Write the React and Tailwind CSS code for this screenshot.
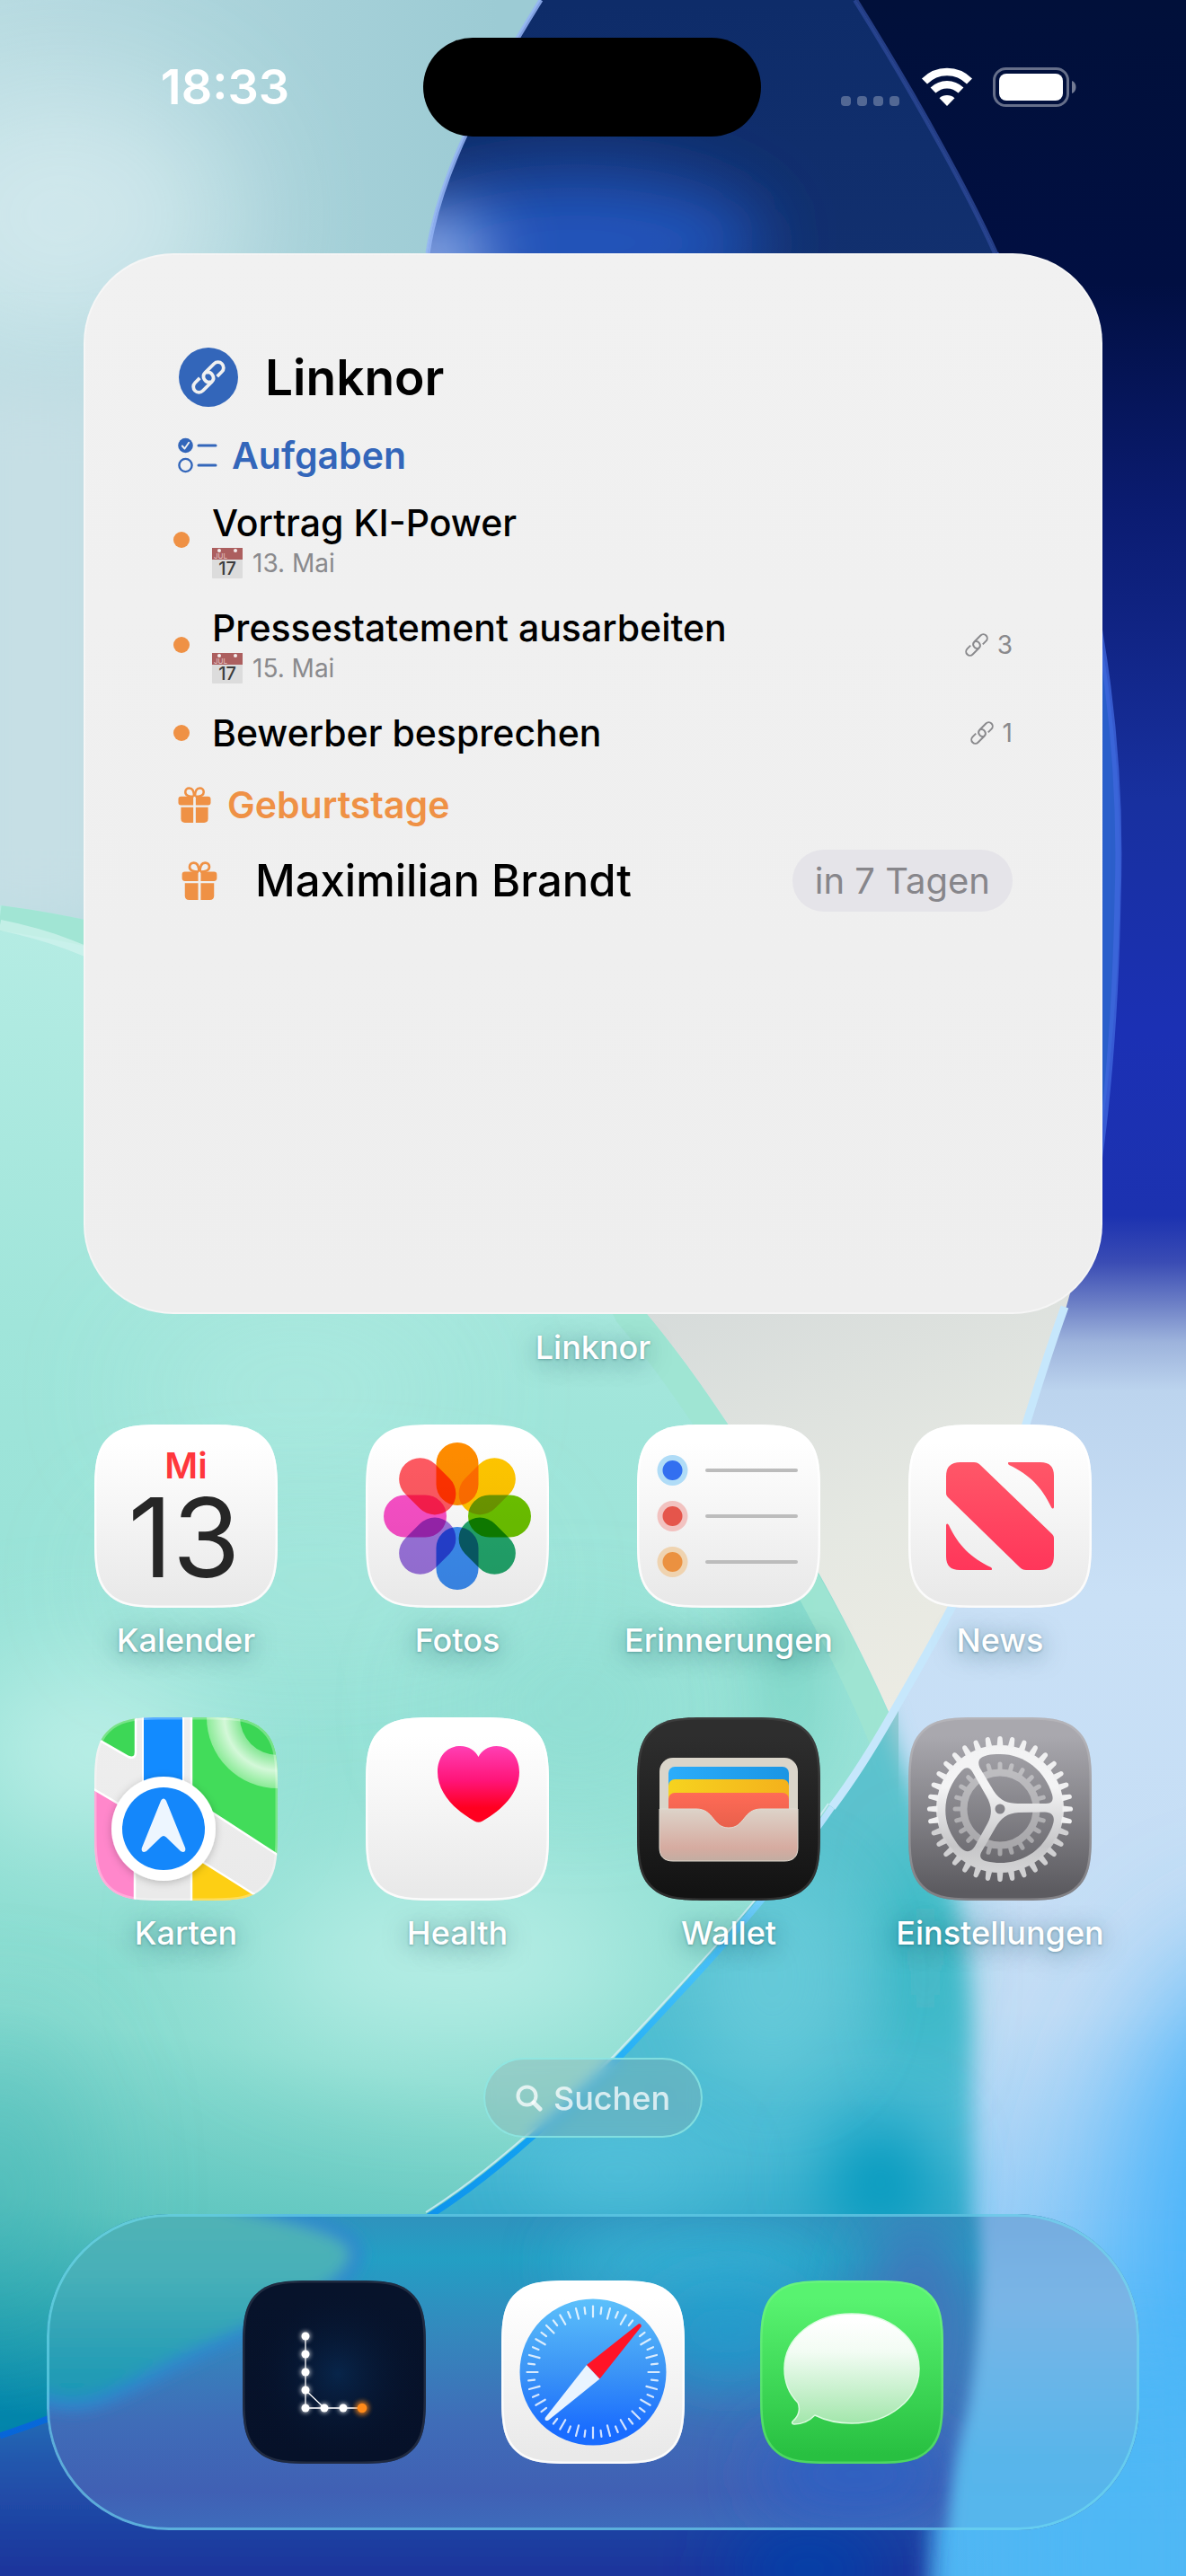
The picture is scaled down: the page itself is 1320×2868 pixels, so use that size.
// src/App.jsx
import React from 'react';

const SQUIRCLE =
  'M72 0H132C164 0 178 4 189 15C200 26 204 40 204 72V132C204 164 200 178 189 189C178 200 164 204 132 204H72C40 204 26 200 15 189C4 178 0 164 0 132V72C0 40 4 26 15 15C26 4 40 0 72 0Z';

const tasks = [
  { title: 'Vortrag KI-Power', date: '13. Mai' },
  { title: 'Pressestatement ausarbeiten', date: '15. Mai', links: 3 },
  { title: 'Bewerber besprechen', links: 1 },
];

/* --- WALLPAPER --- */
const Wallpaper = () => (
  <svg
    className="absolute inset-0 h-full w-full"
    viewBox="0 0 1320 2868"
    preserveAspectRatio="none"
    aria-hidden="true"
  >
    <defs>
      <linearGradient id="wp-sky" x1="0" y1="0" x2="1" y2="0">
        <stop offset="0" stopColor="#b6dae0" />
        <stop offset="0.42" stopColor="#9ccbd4" />
        <stop offset="1" stopColor="#9ccbd4" />
      </linearGradient>
      <linearGradient id="wp-paper" x1="0.3" y1="0" x2="0.7" y2="1">
        <stop offset="0" stopColor="#d6dbda" />
        <stop offset="0.5" stopColor="#e5e8e2" />
        <stop offset="1" stopColor="#efede4" />
      </linearGradient>
      <linearGradient id="wp-right" x1="0" y1="0" x2="0" y2="1">
        <stop offset="0" stopColor="#01103a" />
        <stop offset="0.11" stopColor="#010f42" />
        <stop offset="0.2" stopColor="#0b1c72" />
        <stop offset="0.31" stopColor="#18309f" />
        <stop offset="0.4" stopColor="#1b30b4" />
        <stop offset="0.472" stopColor="#1c32b0" />
        <stop offset="0.49" stopColor="#3a4cb4" />
        <stop offset="0.506" stopColor="#6c7fc6" />
        <stop offset="0.521" stopColor="#9db3dc" />
        <stop offset="0.54" stopColor="#bcd4ee" />
        <stop offset="0.62" stopColor="#c9e0f6" />
        <stop offset="0.78" stopColor="#c4ddf5" />
        <stop offset="0.87" stopColor="#94ccf7" />
        <stop offset="0.93" stopColor="#52baf7" />
        <stop offset="1" stopColor="#4fb5f2" />
      </linearGradient>
      <linearGradient id="wp-lens" x1="0" y1="0" x2="0" y2="1">
        <stop offset="0" stopColor="#0e2c69" />
        <stop offset="0.22" stopColor="#12306f" />
        <stop offset="0.36" stopColor="#2148a6" />
        <stop offset="0.7" stopColor="#2659bd" />
        <stop offset="1" stopColor="#2a5fd0" />
      </linearGradient>
      <linearGradient id="wp-teal" x1="0" y1="0" x2="0" y2="1">
        <stop offset="0" stopColor="#5fc3cd" />
        <stop offset="0.2" stopColor="#57c2cf" />
        <stop offset="0.45" stopColor="#4abad4" />
        <stop offset="0.56" stopColor="#2ba4c8" />
        <stop offset="0.64" stopColor="#228fc2" />
        <stop offset="0.76" stopColor="#2258ae" />
        <stop offset="0.88" stopColor="#1c339b" />
        <stop offset="1" stopColor="#1b2f99" />
      </linearGradient>
      <linearGradient id="wp-green" x1="0.3" y1="0" x2="0.2" y2="1">
        <stop offset="0" stopColor="#b8ede5" />
        <stop offset="0.3" stopColor="#a0e5da" />
        <stop offset="0.5" stopColor="#98e2d7" />
        <stop offset="0.74" stopColor="#8adcd0" />
        <stop offset="0.86" stopColor="#5ec5bf" />
        <stop offset="0.93" stopColor="#2aa5b2" />
        <stop offset="1" stopColor="#0084ab" />
      </linearGradient>
      <linearGradient id="wp-arc" x1="1" y1="0" x2="0" y2="1">
        <stop offset="0" stopColor="#bfe4fb" />
        <stop offset="0.18" stopColor="#4cc4fa" />
        <stop offset="0.4" stopColor="#12a6f4" />
        <stop offset="1" stopColor="#0765d8" />
      </linearGradient>
      <clipPath id="wp-below-arc">
        <path d="M1400 1300H1190C1165 1480 1150 1555 1139 1590C1105 1710 1040 1820 990 1906C920 2030 815 2150 686 2290C600 2370 540 2425 476 2465C330 2560 180 2650 0 2710V2868H1400Z" />
      </clipPath>
      <clipPath id="wp-green-clip">
        <path d="M0 1008C330 1050 600 1220 720 1463C810 1570 930 1770 990 1908C920 2030 815 2150 686 2290C600 2370 540 2425 476 2465C330 2560 180 2650 0 2710Z" />
      </clipPath>
      <clipPath id="wp-lens-clip">
        <path d="M602 0H952C1030 125 1085 230 1108 282C1230 620 1250 830 1246 1000C1243 1160 1222 1340 1183 1463H300L476 282C490 190 540 100 602 0Z" />
      </clipPath>
      <filter id="wp-blur-s" x="-50%" y="-50%" width="200%" height="200%">
        <feGaussianBlur stdDeviation="12" />
      </filter>
      <filter id="wp-blur-m" filterUnits="userSpaceOnUse" x="-400" y="-400" width="2200" height="3700">
        <feGaussianBlur stdDeviation="40" />
      </filter>
      <filter id="wp-blur-l" filterUnits="userSpaceOnUse" x="-500" y="-500" width="2400" height="3900">
        <feGaussianBlur stdDeviation="75" />
      </filter>
    </defs>

    {/* --- pale glass, top left --- */}
    <rect width="1320" height="2868" fill="url(#wp-sky)" />
    <ellipse cx="70" cy="240" rx="190" ry="150" fill="#d6ebef" opacity="0.85" filter="url(#wp-blur-l)" />
    <rect x="-60" y="420" width="200" height="620" fill="#c6dfe5" filter="url(#wp-blur-m)" />

    {/* --- right side --- */}
    <path
      d="M952 0H1320V2868H1000V1900L1139 1590C1250 1200 1290 700 1108 282C1085 230 1030 125 952 0Z"
      fill="url(#wp-right)"
    />

    {/* --- blue lens --- */}
    <g clipPath="url(#wp-lens-clip)">
      <rect width="1320" height="1463" fill="url(#wp-lens)" />
      <ellipse cx="640" cy="270" rx="210" ry="75" fill="#2454bc" filter="url(#wp-blur-m)" />
      <ellipse cx="480" cy="290" rx="60" ry="44" fill="#b4ccff" filter="url(#wp-blur-m)" />
      <rect x="1180" y="700" width="80" height="760" fill="#2a5fcb" filter="url(#wp-blur-s)" />
    </g>
    <path d="M600 1436H1192C1175 1500 1155 1550 1139 1590C1105 1710 1040 1820 985 1915L900 2000Z" fill="url(#wp-paper)" />
    <path d="M602 0C540 100 490 190 476 282" fill="none" stroke="#94b4f4" strokeWidth="5" opacity="0.85" />
    <path
      d="M952 0C1030 125 1085 230 1108 282"
      fill="none"
      stroke="#2c4796"
      strokeWidth="6"
      opacity="0.8"
    />
    <path
      d="M1108 282C1230 620 1250 830 1244 1000C1241 1160 1226 1330 1194 1430"
      fill="none"
      stroke="#3f66dc"
      strokeWidth="7"
      opacity="0.8"
    />

    {/* --- teal and light blue glass below the arc --- */}
    <g clipPath="url(#wp-below-arc)">
      <ellipse cx="1420" cy="2500" rx="180" ry="330" fill="#46b3fa" filter="url(#wp-blur-l)" />
      <rect x="1100" y="2640" width="300" height="400" fill="#4fb8f5" filter="url(#wp-blur-l)" />
      <g filter="url(#wp-blur-s)">
        <path
          d="M-60 3000V1900H985C1000 1990 1075 2060 1082 2250V2500C1080 2620 1032 2680 1030 3000Z"
          fill="url(#wp-teal)"
        />
      </g>
      <ellipse cx="1030" cy="2180" rx="14" ry="130" fill="#18a8ae" filter="url(#wp-blur-m)" />
      <ellipse cx="980" cy="2430" rx="60" ry="70" fill="#0398bd" filter="url(#wp-blur-m)" />
      <ellipse cx="860" cy="2200" rx="90" ry="120" fill="#72d0de" opacity="0.6" filter="url(#wp-blur-m)" />
      <ellipse cx="690" cy="2420" rx="110" ry="40" fill="#5ac4de" opacity="0.7" filter="url(#wp-blur-m)" />
      <ellipse cx="900" cy="2860" rx="90" ry="50" fill="#003fa9" filter="url(#wp-blur-m)" />
    </g>

    {/* --- mint disc --- */}
    <g clipPath="url(#wp-green-clip)">
      <rect y="1000" width="1020" height="1720" fill="url(#wp-green)" />
      <ellipse cx="100" cy="1950" rx="130" ry="70" fill="#d0f7f1" filter="url(#wp-blur-l)" />
      <ellipse cx="330" cy="1550" rx="170" ry="50" fill="#b8ede5" opacity="0.8" filter="url(#wp-blur-l)" />
      <ellipse cx="350" cy="1760" rx="220" ry="40" fill="#b4ebe3" opacity="0.7" filter="url(#wp-blur-l)" />
      <ellipse cx="500" cy="2180" rx="230" ry="90" fill="#bcf0e8" filter="url(#wp-blur-l)" />
      <ellipse cx="640" cy="1900" rx="130" ry="50" fill="#84d9cd" opacity="0.7" filter="url(#wp-blur-l)" />
      <ellipse cx="880" cy="1800" rx="20" ry="200" fill="#62c9b7" filter="url(#wp-blur-m)" />
      <ellipse cx="0" cy="2440" rx="70" ry="180" fill="#3fb3b5" opacity="0.6" filter="url(#wp-blur-l)" />
      <path
        d="M0 1020C320 1064 590 1232 700 1463C790 1570 910 1770 970 1905L1010 2000"
        fill="none"
        stroke="#9fe4d2"
        strokeWidth="32"
        opacity="0.9"
      />
      <path d="M0 1030C60 1042 100 1060 140 1080" fill="none" stroke="#d2f4ee" strokeWidth="12" opacity="0.7" />
    </g>
    <path
      d="M1185 1455C1165 1510 1150 1560 1140 1592C1108 1710 1043 1822 993 1908C972 1945 950 1980 926 2012"
      fill="none"
      stroke="#c6e7fc"
      strokeWidth="9"
    />
    <path
      d="M926 2012C850 2122 770 2205 687 2293C600 2374 540 2428 478 2467C330 2562 180 2652 0 2712"
      fill="none"
      stroke="url(#wp-arc)"
      strokeWidth="7"
    />
    <path
      d="M922 2008C846 2118 766 2201 683 2289C596 2370 536 2424 474 2463"
      fill="none"
      stroke="#d6eef8"
      strokeWidth="2"
      opacity="0.8"
    />
  </svg>
);

/* --- STATUS BAR --- */
const StatusBar = () => (
  <header className="flex h-[110px] items-center text-white">
    <div className="flex-1 pl-[30px] text-center text-[54px] leading-[60px] font-semibold">18:33</div>
    <div className="h-full w-[376px] rounded-full bg-black" />
    <div className="flex flex-1 items-center justify-center gap-[22px] pr-[32px]">
      <svg width="67" height="44" viewBox="0 0 67 44" fill="#fff" opacity="0.28" aria-hidden="true">
        <rect x="0" y="32" width="11" height="11" rx="4" />
        <rect x="18" y="32" width="11" height="11" rx="4" />
        <rect x="36" y="32" width="11" height="11" rx="4" />
        <rect x="54" y="32" width="11" height="11" rx="4" />
      </svg>
      <svg width="58" height="44" viewBox="0 0 58 44" aria-hidden="true">
        <g fill="none" stroke="#fff" strokeWidth="8.5">
          <path d="M4 15.5C18 1.500 40 1.500 54 15.500" />
          <path d="M13.500 25.500C22.500 17 35.500 17 44.500 25.500" />
        </g>
        <path d="M29 43L20.500 34.300C25 30 33 30 37.500 34.300Z" fill="#fff" />
      </svg>
      <svg width="94" height="44" viewBox="0 0 94 44" aria-hidden="true">
        <rect x="1.500" y="1.500" width="82" height="41" rx="13" fill="none" stroke="#fff" strokeOpacity="0.4" strokeWidth="3" />
        <rect x="7" y="7" width="71" height="30" rx="8" fill="#fff" />
        <path d="M88 15C94 17 94 27 88 29Z" fill="#fff" opacity="0.45" />
      </svg>
    </div>
  </header>
);

/* --- WIDGET ICONS --- */
const LinkGlyph = ({ className, strokeWidth = 3.8 }) => (
  <svg className={className} viewBox="-20 -20 40 40" aria-hidden="true">
    <g
      transform="rotate(-45)"
      fill="none"
      stroke="currentColor"
      strokeWidth={strokeWidth}
      strokeLinecap="butt"
    >
      <path d="M7.500 6.200H15A6.200 6.200 0 0 0 15 -6.200H1A6.200 6.200 0 0 0 -1.600 5.600" />
      <path d="M-7.500 -6.200H-15A6.200 6.200 0 0 0 -15 6.200H-1A6.200 6.200 0 0 0 1.600 -5.600" />
    </g>
  </svg>
);

const ChecklistGlyph = () => (
  <svg className="h-[40px] w-[44px]" viewBox="0 0 44 40" aria-hidden="true">
    <circle cx="8.500" cy="9" r="8.300" fill="#3366ba" />
    <path d="M4.800 9.500L7.500 12.500L12.200 5.800" fill="none" stroke="#f0f0f0" strokeWidth="1.900" strokeLinecap="round" strokeLinejoin="round" />
    <circle cx="8.500" cy="31" r="7.100" fill="none" stroke="#3366ba" strokeWidth="2.400" />
    <path d="M23 9H42M23 31H42" stroke="#3366ba" strokeWidth="3" strokeLinecap="round" />
  </svg>
);

const GiftGlyph = ({ className }) => (
  <svg className={className} viewBox="0 0 38 42" fill="#ef9145" aria-hidden="true">
    <path d="M18 11C12 11 8.500 9.500 8.500 6C8.500 3 10.500 1.500 13 1.500C16.500 1.500 18.500 5 18.500 11" fill="none" stroke="#ef9145" strokeWidth="2.600" />
    <path d="M20 11C26 11 29.500 9.500 29.500 6C29.500 3 27.500 1.500 25 1.500C21.500 1.500 19.500 5 19.500 11" fill="none" stroke="#ef9145" strokeWidth="2.600" />
    <path d="M17.600 11V21H3.500C1.500 21 0.500 20 0.500 18V14C0.500 12 1.500 11 3.500 11Z" />
    <path d="M20.400 11V21H34.500C36.500 21 37.500 20 37.500 18V14C37.500 12 36.500 11 34.500 11Z" />
    <path d="M17.600 23.200V41H8C5 41 3.500 39.500 3.500 36.500V23.200Z" />
    <path d="M20.400 23.200V41H30C33 41 34.500 39.500 34.500 36.500V23.200Z" />
  </svg>
);

const DateGlyph = () => (
  <svg className="h-[34px] w-[34px]" viewBox="0 0 34 34" aria-hidden="true">
    <rect width="34" height="34" rx="1" fill="#dcdcdc" />
    <rect width="34" height="13" fill="#ac5f5f" />
    <circle cx="8" cy="3" r="2" fill="#f4eeee" />
    <circle cx="26" cy="3" r="2" fill="#f4eeee" />
    <text x="2" y="11.500" fontSize="8" fill="#e3c3c3">JUL</text>
    <text x="17" y="30" fontSize="20" fontWeight="500" textAnchor="middle" fill="#3c3c3c">17</text>
  </svg>
);

/* --- WIDGET --- */
const TaskRow = ({ task }) => (
  <li className="flex items-center">
    <span className="mr-[25px] h-[18px] w-[18px] shrink-0 rounded-full bg-[#ef9145]" />
    <div className="min-w-0 flex-1">
      <p className="text-[41px] leading-[50px] font-medium text-black">{task.title}</p>
      {task.date && (
        <p className="mt-[3px] flex items-center gap-[11px] text-[28px] leading-[34px] text-[#8a8a8d]">
          <DateGlyph />
          {task.date}
        </p>
      )}
    </div>
    {task.links && (
      <span className="flex items-center gap-[9px] text-[28px] leading-[34px] text-[#8a8a8d]">
        <LinkGlyph className="h-[28px] w-[28px]" strokeWidth={2.8} />
        {task.links}
      </span>
    )}
  </li>
);

const LinknorWidget = () => (
  <section className="min-h-[1181px] rounded-[100px] border-2 border-white/40 bg-gradient-to-b from-[#f1f1f1] to-[#eeeeee] px-[98px] pt-[103px]">
    <div className="flex items-center gap-[30px] pl-[6px]">
      <span className="flex h-[66px] w-[66px] items-center justify-center rounded-full bg-[#3366ba] text-[#f0f0f0]">
        <LinkGlyph className="h-[40px] w-[40px]" />
      </span>
      <h1 className="text-[55px] leading-[66px] font-semibold text-black">Linknor</h1>
    </div>

    <h2 className="mt-[29px] flex items-center gap-[16px] pl-[5px] text-[41px] leading-[50px] font-semibold text-[#3366ba]">
      <ChecklistGlyph />
      Aufgaben
    </h2>
    <ul className="mt-[25px] flex flex-col gap-[30px]">
      {tasks.map((task) => (
        <TaskRow key={task.title} task={task} />
      ))}
    </ul>

    <h2 className="mt-[30px] flex items-center gap-[18px] pl-[5px] text-[41px] leading-[50px] font-semibold text-[#ef9145]">
      <GiftGlyph className="h-[41px] w-[37px]" />
      Geburtstage
    </h2>
    <div className="mt-[25px] flex items-center pl-[9px]">
      <GiftGlyph className="h-[44px] w-[40px]" />
      <p className="ml-[42px] flex-1 text-[49px] leading-[60px] font-medium text-black">Maximilian Brandt</p>
      <span className="rounded-full bg-[#e5e4e9] px-[25px] text-[40px] leading-[69px] text-[#87868b]">
        in 7 Tagen
      </span>
    </div>
  </section>
);

/* --- APP ICONS --- */
const IconFrame = ({ id, from, to, rim = '#ffffff', rimOpacity = 0.55, children }) => (
  <svg className="h-[204px] w-[204px]" viewBox="0 0 204 204" aria-hidden="true">
    <defs>
      <clipPath id={`${id}-clip`}>
        <path d={SQUIRCLE} />
      </clipPath>
      <linearGradient id={`${id}-bg`} x1="0" y1="0" x2="0" y2="1">
        <stop offset="0.1" stopColor={from} />
        <stop offset="0.95" stopColor={to} />
      </linearGradient>
    </defs>
    <g clipPath={`url(#${id}-clip)`}>
      <rect width="204" height="204" fill={`url(#${id}-bg)`} />
      {children}
      <path d={SQUIRCLE} fill="none" stroke={rim} strokeWidth="5" opacity={rimOpacity} />
    </g>
  </svg>
);

const KalenderIcon = () => (
  <IconFrame id="kalender" from="#ffffff" to="#e9e9e9" rimOpacity={0.8}>
    <text x="102" y="60" fontSize="40" fontWeight="600" textAnchor="middle" fill="#ff373c">Mi</text>
    <text x="100" y="170" fontSize="122" fontWeight="400" textAnchor="middle" fill="#262626">13</text>
  </IconFrame>
);

const petals = [
  ['#ff8c00', 0],
  ['#ffc600', 45],
  ['#6cc200', 90],
  ['#22a66c', 135],
  ['#3c8df2', 180],
  ['#9c74de', 225],
  ['#fa50c8', 270],
  ['#ff5a62', 315],
];

const FotosIcon = () => (
  <IconFrame id="fotos" from="#ffffff" to="#e9e9e9" rimOpacity={0.8}>
    {petals.map(([color, angle]) => (
      <rect
        key={angle}
        className="mix-blend-multiply"
        x="78.500"
        y="20"
        width="47"
        height="70"
        rx="23.500"
        fill={color}
        transform={`rotate(${angle} 102 102)`}
      />
    ))}
  </IconFrame>
);

const reminderRows = [
  { y: 51, halo: '#b0dcf7', dot: '#326ff0' },
  { y: 102, halo: '#f2c2c0', dot: '#e5554b' },
  { y: 153, halo: '#efd3b0', dot: '#eb9140' },
];

const ErinnerungenIcon = () => (
  <IconFrame id="erinnerungen" from="#ffffff" to="#e9e9e9" rimOpacity={0.8}>
    {reminderRows.map((row) => (
      <g key={row.y}>
        <circle cx="39.500" cy={row.y} r="17" fill={row.halo} />
        <circle cx="39.500" cy={row.y} r="11" fill={row.dot} />
        <path d={`M78 ${row.y}H177`} stroke="#bcbcbc" strokeWidth="4" strokeLinecap="round" />
      </g>
    ))}
  </IconFrame>
);

const NewsIcon = () => (
  <IconFrame id="news" from="#ffffff" to="#e9e9e9" rimOpacity={0.8}>
    <defs>
      <linearGradient id="news-red" x1="0" y1="42" x2="0" y2="162" gradientUnits="userSpaceOnUse">
        <stop offset="0" stopColor="#ff5768" />
        <stop offset="1" stopColor="#ff365a" />
      </linearGradient>
    </defs>
    <g fill="url(#news-red)">
      <path d="M58 42H73C76 42 78 43 80 45L160 122C161.500 123.500 162 125 162 127V146C162 157 157 162 146 162H131C128 162 126 161 124 159L44 81C42.500 79.500 42 78 42 76V58C42 47 47 42 58 42Z" />
      <path d="M112 42H147C157 42 162 47 162 57V92C161.500 94 160 94 159 92C148 69 135 56 112 45C110.500 43.500 110.500 42 112 42Z" />
      <path d="M92 162H57C47 162 42 157 42 147V112C42.500 110 44 110 45 112C56 135 69 148 92 159C93.500 160.500 93.500 162 92 162Z" />
    </g>
  </IconFrame>
);

const KartenIcon = () => (
  <IconFrame id="karten" from="#eeeeee" to="#eaeaea" rimOpacity={0.3}>
    <defs>
      <radialGradient id="karten-ring" cx="204" cy="0" r="80" gradientUnits="userSpaceOnUse">
        <stop offset="0.54" stopColor="#8ce89a" />
        <stop offset="0.74" stopColor="#d4f8d9" />
        <stop offset="0.98" stopColor="#8deb99" />
      </radialGradient>
      <filter id="karten-shadow" x="-30%" y="-30%" width="160%" height="160%">
        <feDropShadow dx="0" dy="2" stdDeviation="5" floodOpacity="0.22" />
      </filter>
    </defs>
    <g stroke="#ffffff" strokeWidth="2.500">
      <path d="M-4 20L38 44C43 46 46 44 46 39V-4H-4Z" fill="#3dd756" />
      <path d="M108 -4H210V157L108 91Z" fill="#42dc5a" />
      <path d="M-4 78L45 107V210H-4Z" fill="#ff87cb" />
      <path d="M108 153L192 206H108Z" fill="#fdcf14" />
    </g>
    <circle cx="204" cy="0" r="79" fill="url(#karten-ring)" />
    <circle cx="204" cy="0" r="42" fill="#3bd655" />
    <rect x="53" y="-2" width="47" height="100" fill="#ffffff" />
    <rect x="55" y="-2" width="43" height="100" fill="#128bff" />
    <circle cx="77" cy="124" r="58" fill="#ffffff" filter="url(#karten-shadow)" />
    <circle cx="77" cy="124" r="46" fill="#1487fb" />
    <path d="M74 93C75.500 89.500 78.500 89.500 80 93L101 145C102.500 149.500 99 151.500 95.500 148.500L80 133.500C78 131.500 76 131.500 74 133.500L58.500 148.500C55 151.500 51.500 149.500 53 145Z" fill="#edf6ff" />
  </IconFrame>
);

const HealthIcon = () => (
  <IconFrame id="health" from="#ffffff" to="#e9e9e9" rimOpacity={0.8}>
    <defs>
      <linearGradient id="health-heart" x1="0" y1="32" x2="0" y2="118" gradientUnits="userSpaceOnUse">
        <stop offset="0" stopColor="#ff3fb4" />
        <stop offset="0.45" stopColor="#ff1478" />
        <stop offset="0.8" stopColor="#ff0020" />
      </linearGradient>
    </defs>
    <path
      d="M125.500 44C129 37 136 32 145.500 32C160 32 171 43 171 61C171 84 152 103 130 115.500C127 117.300 124 117.300 121 115.500C99 103 80 84 80 61C80 43 91 32 105.500 32C115 32 122 37 125.500 44Z"
      fill="url(#health-heart)"
    />
  </IconFrame>
);

const WalletIcon = () => (
  <IconFrame id="wallet" from="#2e2e2e" to="#131313" rim="#4a4a4a" rimOpacity={0.5}>
    <defs>
      <linearGradient id="wallet-pocket" x1="0" y1="102" x2="0" y2="160" gradientUnits="userSpaceOnUse">
        <stop offset="0" stopColor="#ddd3c9" />
        <stop offset="0.75" stopColor="#d6aba0" />
        <stop offset="1" stopColor="#c2ada2" />
      </linearGradient>
      <linearGradient id="wallet-blue" x1="0" y1="0" x2="1" y2="0">
        <stop offset="0" stopColor="#2badfb" />
        <stop offset="1" stopColor="#1a95e4" />
      </linearGradient>
      <linearGradient id="wallet-yellow" x1="0" y1="0" x2="1" y2="0">
        <stop offset="0" stopColor="#f6d31f" />
        <stop offset="1" stopColor="#f4b11c" />
      </linearGradient>
      <linearGradient id="wallet-red" x1="0" y1="0" x2="0" y2="1">
        <stop offset="0" stopColor="#ff6b56" />
        <stop offset="1" stopColor="#dc5a46" />
      </linearGradient>
    </defs>
    <rect x="25" y="45" width="154" height="115" rx="15" fill="#dad5ca" />
    <rect x="35" y="55" width="134" height="60" rx="7" fill="url(#wallet-blue)" />
    <rect x="35" y="69" width="134" height="60" rx="7" fill="url(#wallet-yellow)" />
    <rect x="35" y="84" width="134" height="60" rx="7" fill="url(#wallet-red)" />
    <path
      d="M25 102H66C86 102 84 123 102 123C120 123 118 102 138 102H179V145C179 155 174 160 164 160H40C30 160 25 155 25 145Z"
      fill="url(#wallet-pocket)"
      stroke="#e2dcd2"
      strokeWidth="1"
    />
  </IconFrame>
);

const gearOpening =
  'M95 82L80 57C75 47 80 41 102 41C130 41 152 60 160 86C162 93 159 96 153 96H122C111 96 102 93 95 82Z';

const EinstellungenIcon = () => (
  <IconFrame id="einstellungen" from="#a9a8ae" to="#5c5b60" rim="#c8c8cc" rimOpacity={0.35}>
    <defs>
      <linearGradient id="gear-fill" x1="0" y1="20" x2="0" y2="184" gradientUnits="userSpaceOnUse">
        <stop offset="0" stopColor="#f2f2f3" />
        <stop offset="0.35" stopColor="#f4f4f5" />
        <stop offset="0.75" stopColor="#c6c6c8" />
        <stop offset="1" stopColor="#d9d9da" />
      </linearGradient>
      <mask id="gear-mask">
        <rect width="204" height="204" fill="#fff" />
        <path d={gearOpening} />
        <path d={gearOpening} transform="rotate(120 102 102)" />
        <path d={gearOpening} transform="rotate(240 102 102)" />
        <circle cx="102" cy="102" r="5.500" />
      </mask>
    </defs>
    <g opacity="0.42" fill="none" stroke="#f2f2f3">
      <circle cx="102" cy="102" r="40.500" strokeWidth="8" />
      {Array.from({ length: 24 }, (_, i) => (
        <path key={i} d="M102 58V52" strokeWidth="5" strokeLinecap="round" transform={`rotate(${i * 15} 102 102)`} />
      ))}
    </g>
    <g mask="url(#gear-mask)">
      <circle cx="102" cy="102" r="71" fill="url(#gear-fill)" />
    </g>
    {Array.from({ length: 36 }, (_, i) => (
      <path
        key={i}
        d="M98.500 32.500L99.400 23C99.800 20.200 104.200 20.200 104.600 23L105.500 32.500Z"
        fill={i > 10 && i < 26 ? '#d0d0d2' : '#f0f0f1'}
        transform={`rotate(${i * 10} 102 102)`}
      />
    ))}
  </IconFrame>
);

const nodePoints = [
  [70, 62],
  [70, 82],
  [70, 102],
  [70, 122],
  [70, 142],
  [91, 142],
  [112, 142],
];

const LinknorIcon = () => (
  <IconFrame id="linknor" from="#07132b" to="#061129" rim="#3a4358" rimOpacity={0.5}>
    <defs>
      <radialGradient id="linknor-glow">
        <stop offset="0" stopColor="#08254a" />
        <stop offset="1" stopColor="#061129" stopOpacity="0" />
      </radialGradient>
      <filter id="linknor-soft" x="-100%" y="-100%" width="300%" height="300%">
        <feGaussianBlur stdDeviation="2.500" />
      </filter>
    </defs>
    <circle cx="106" cy="104" r="100" fill="url(#linknor-glow)" />
    <path d="M70 62V142M70 122L91 142" fill="none" stroke="#ffffff" strokeWidth="1.300" />
    <path d="M70 142H133" stroke="#c9ccd4" strokeWidth="2" />
    {nodePoints.map(([x, y]) => (
      <g key={`${x}-${y}`} fill="#ffffff">
        <circle cx={x} cy={y} r="5.500" opacity="0.7" filter="url(#linknor-soft)" />
        <circle cx={x} cy={y} r="4.500" />
      </g>
    ))}
    <circle cx="133" cy="142" r="8" fill="#ff8a1a" opacity="0.7" filter="url(#linknor-soft)" />
    <circle cx="133" cy="142" r="5.300" fill="#ff8a1a" />
  </IconFrame>
);

const SafariIcon = () => (
  <IconFrame id="safari" from="#ffffff" to="#e9e9e9" rimOpacity={0.8}>
    <defs>
      <linearGradient id="safari-blue" x1="0" y1="0" x2="0" y2="1">
        <stop offset="0" stopColor="#5cc0fb" />
        <stop offset="0.5" stopColor="#3b94f6" />
        <stop offset="0.9" stopColor="#196cff" />
      </linearGradient>
    </defs>
    <circle cx="102" cy="102" r="81.500" fill="url(#safari-blue)" />
    {Array.from({ length: 48 }, (_, i) => (
      <path
        key={i}
        d={i % 2 ? 'M102 29.500V36.500' : 'M102 28.500V40.500'}
        stroke="#ffffff"
        strokeOpacity="0.8"
        strokeWidth="2.200"
        strokeLinecap="round"
        transform={`rotate(${i * 7.5} 102 102)`}
      />
    ))}
    <path d="M95 94L109.500 109.500L52.500 155.500C49.500 157 47.500 155.500 49 152.500Z" fill="#e9f4ff" />
    <path d="M95 94L109.500 109.500L155.500 51.500C156.500 49 154.500 47.500 152.500 48.500Z" fill="#ff1427" />
  </IconFrame>
);

const NachrichtenIcon = () => (
  <IconFrame id="nachrichten" from="#58f370" to="#28c041" rim="#7af58c" rimOpacity={0.45}>
    <defs>
      <linearGradient id="bubble" x1="0" y1="0" x2="0" y2="1">
        <stop offset="0.05" stopColor="#ffffff" />
        <stop offset="0.35" stopColor="#f2fcf3" />
        <stop offset="1" stopColor="#a2e6ab" />
      </linearGradient>
    </defs>
    <path
      d="M102 37C144 37 177 64 177 98C177 132 144 159 102 159C87 159 73 156 61 150C55 156 46 160 38 160C35 160 35 157.500 37 156C43 151 45 143 42 136C32 126 27 113 27 98C27 64 60 37 102 37Z"
      fill="url(#bubble)"
      stroke="#dcfbe0"
      strokeWidth="1.500"
    />
  </IconFrame>
);

const apps = [
  { name: 'Kalender', Icon: KalenderIcon },
  { name: 'Fotos', Icon: FotosIcon },
  { name: 'Erinnerungen', Icon: ErinnerungenIcon },
  { name: 'News', Icon: NewsIcon },
  { name: 'Karten', Icon: KartenIcon },
  { name: 'Health', Icon: HealthIcon },
  { name: 'Wallet', Icon: WalletIcon },
  { name: 'Einstellungen', Icon: EinstellungenIcon },
];

const dockApps = [
  { name: 'Linknor', Icon: LinknorIcon },
  { name: 'Safari', Icon: SafariIcon },
  { name: 'Nachrichten', Icon: NachrichtenIcon },
];

const labelClass =
  'text-[36px] leading-[44px] font-medium text-white [text-shadow:0_1px_3px_rgba(0,60,70,0.35),0_4px_26px_rgba(0,70,85,0.55)]';

/* --- DOCK --- */
const DockGlass = () => (
  <svg className="absolute inset-0 h-full w-full" viewBox="0 0 1217 352" preserveAspectRatio="none" aria-hidden="true">
    <defs>
      <linearGradient id="dock-base" x1="0" y1="0" x2="0" y2="1">
        <stop offset="0" stopColor="#3092bd" />
        <stop offset="0.14" stopColor="#239fc4" />
        <stop offset="0.38" stopColor="#3488bd" />
        <stop offset="0.65" stopColor="#3f6db8" />
        <stop offset="0.88" stopColor="#4060b4" />
        <stop offset="1" stopColor="#3d6cbc" />
      </linearGradient>
      <linearGradient id="dock-mint" x1="0" y1="0" x2="0" y2="1">
        <stop offset="0" stopColor="#55b3b4" />
        <stop offset="0.4" stopColor="#47b0b8" />
        <stop offset="1" stopColor="#1795b4" />
      </linearGradient>
      <linearGradient id="dock-sky" x1="0" y1="0" x2="0" y2="1">
        <stop offset="0" stopColor="#74a9dd" />
        <stop offset="0.3" stopColor="#79b5e6" />
        <stop offset="0.7" stopColor="#58b5ea" />
        <stop offset="1" stopColor="#55b6ee" />
      </linearGradient>
      <filter id="dock-blur-s" x="-20%" y="-20%" width="140%" height="140%">
        <feGaussianBlur stdDeviation="8" />
      </filter>
      <filter id="dock-blur-l" filterUnits="userSpaceOnUse" x="-200" y="-200" width="1700" height="800">
        <feGaussianBlur stdDeviation="34" />
      </filter>
    </defs>
    <rect width="1217" height="352" fill="url(#dock-base)" />
    <ellipse cx="720" cy="55" rx="150" ry="45" fill="#3fb2d6" opacity="0.8" filter="url(#dock-blur-l)" />
    <ellipse cx="760" cy="130" rx="90" ry="60" fill="#1fa0d0" opacity="0.7" filter="url(#dock-blur-l)" />
    <ellipse cx="970" cy="130" rx="60" ry="130" fill="#3f76ba" filter="url(#dock-blur-l)" />
    <ellipse cx="900" cy="290" rx="110" ry="50" fill="#2f60c2" filter="url(#dock-blur-l)" />
    <g filter="url(#dock-blur-s)">
      <path d="M1035 -30C1045 60 1040 140 1025 220C1005 290 1005 340 1000 400H1270V-30Z" fill="url(#dock-sky)" />
      <path
        d="M-40 -30H120C250 0 345 10 345 45C340 85 250 120 180 150C110 180 70 212 30 212C0 212 -20 200 -40 190Z"
        fill="url(#dock-mint)"
        stroke="#2f86cf"
        strokeWidth="14"
      />
    </g>
  </svg>
);

export default function App() {
  return (
    <div className="relative isolate min-h-screen overflow-hidden bg-[#98e2d7] font-['Inter','Liberation_Sans',sans-serif]">
      <Wallpaper />

      <div className="relative flex flex-col pt-[42px] pb-[51px]">
        <StatusBar />

        <main className="mt-[130px]">
          <div className="mx-[93px]">
            <LinknorWidget />
            <p className={`mt-[15px] text-center ${labelClass}`}>Linknor</p>
          </div>

          <div className="mx-[56px] mt-[64px] grid grid-cols-4 gap-y-[64px]">
            {apps.map(({ name, Icon }) => (
              <button key={name} type="button" className="flex flex-col items-center gap-[14px]">
                <Icon />
                <span className={labelClass}>{name}</span>
              </button>
            ))}
          </div>

          <div className="mt-[117px] flex justify-center">
            <button
              type="button"
              className="flex h-[89px] items-center gap-[12px] rounded-full border-2 border-[#8ff0ea]/70 bg-[#8aa9ad]/35 px-[34px] text-[36px] leading-[44px] font-medium text-white/75 backdrop-blur-sm"
            >
              <svg className="h-[30px] w-[30px]" viewBox="0 0 30 30" fill="none" stroke="currentColor" aria-hidden="true">
                <circle cx="12.500" cy="12.500" r="10" strokeWidth="4" />
                <path d="M20 20L27 27" strokeWidth="5" strokeLinecap="round" />
              </svg>
              Suchen
            </button>
          </div>
        </main>

        <nav className="relative mx-[52px] mt-[85px] flex h-[352px] items-center justify-center gap-[84px] overflow-hidden rounded-[136px]">
          <DockGlass />
          <div className="absolute inset-0 rounded-[136px] border-[3px] border-[#6fdcf2]/60" />
          {dockApps.map(({ name, Icon }) => (
            <button key={name} type="button" aria-label={name} className="relative">
              <Icon />
            </button>
          ))}
        </nav>
      </div>
    </div>
  );
}
